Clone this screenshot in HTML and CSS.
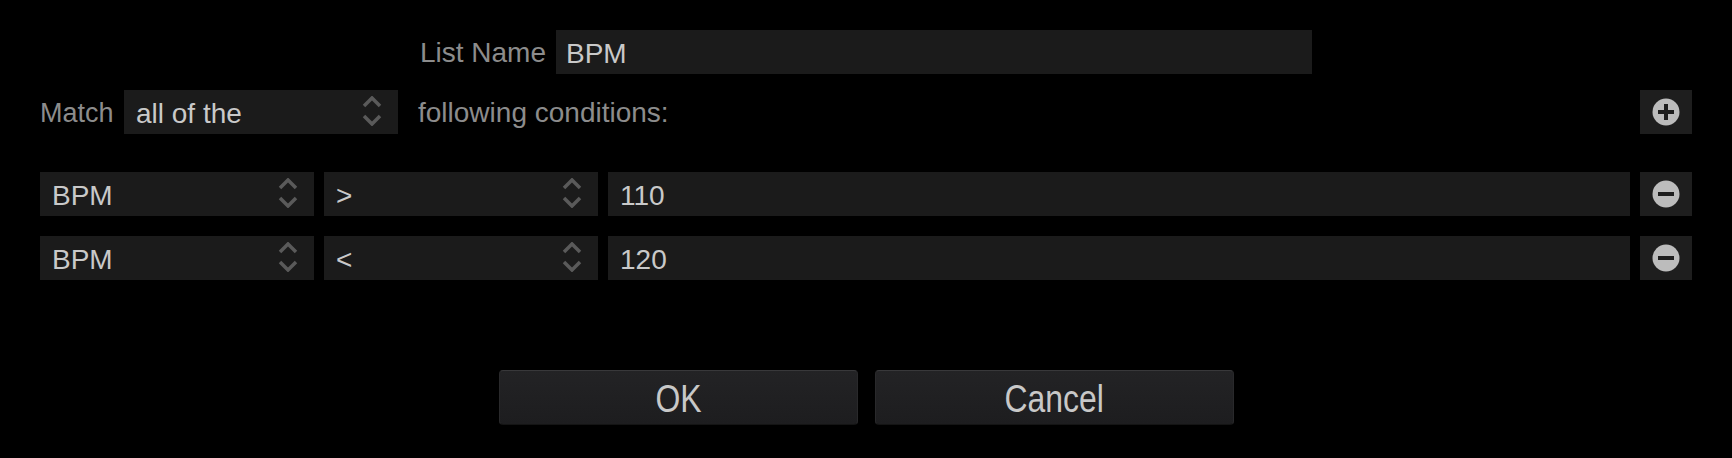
FILE: index.html
```html
<!DOCTYPE html>
<html lang="en">
<head>
    <meta charset="UTF-8">
    <meta name="viewport" content="width=device-width, initial-scale=1.0">
    <title>Smart List</title>
    <link rel="stylesheet" href="styles.css">
</head>
<body>

    <div class="dialog">
        <div class="name-row">
            <label class="label name-label" for="list-name">List Name</label>
            <div class="field name-field" id="list-name">BPM</div>
        </div>

        <div class="match-row">
            <span class="label match-label">Match</span>
            <div class="select match-select">
                <span>all of the</span>
                <svg class="chevrons" width="20" height="30" viewBox="0 0 20 30"><polyline points="2,10 10,2 18,10"/><polyline points="2,20 10,28 18,20"/></svg>
            </div>
            <span class="label following">following conditions:</span>
            <button class="icon-btn add-btn" title="Add condition">
                <svg width="28" height="28" viewBox="0 0 28 28"><circle cx="14" cy="14" r="13.5" class="disc"/><rect x="6" y="12" width="16" height="4" class="sign"/><rect x="12" y="6" width="4" height="16" class="sign"/></svg>
            </button>
        </div>

        <div class="conditions">
            <div class="cond-row">
                <div class="select">
                    <span>BPM</span>
                    <svg class="chevrons" width="20" height="30" viewBox="0 0 20 30"><polyline points="2,10 10,2 18,10"/><polyline points="2,20 10,28 18,20"/></svg>
                </div>
                <div class="select">
                    <span>&gt;</span>
                    <svg class="chevrons" width="20" height="30" viewBox="0 0 20 30"><polyline points="2,10 10,2 18,10"/><polyline points="2,20 10,28 18,20"/></svg>
                </div>
                <div class="field value-field">110</div>
                <button class="icon-btn" title="Remove condition">
                    <svg width="28" height="28" viewBox="0 0 28 28"><circle cx="14" cy="14" r="13.5" class="disc"/><rect x="6" y="12" width="16" height="4" class="sign"/></svg>
                </button>
            </div>
            <div class="cond-row">
                <div class="select">
                    <span>BPM</span>
                    <svg class="chevrons" width="20" height="30" viewBox="0 0 20 30"><polyline points="2,10 10,2 18,10"/><polyline points="2,20 10,28 18,20"/></svg>
                </div>
                <div class="select">
                    <span>&lt;</span>
                    <svg class="chevrons" width="20" height="30" viewBox="0 0 20 30"><polyline points="2,10 10,2 18,10"/><polyline points="2,20 10,28 18,20"/></svg>
                </div>
                <div class="field value-field">120</div>
                <button class="icon-btn" title="Remove condition">
                    <svg width="28" height="28" viewBox="0 0 28 28"><circle cx="14" cy="14" r="13.5" class="disc"/><rect x="6" y="12" width="16" height="4" class="sign"/></svg>
                </button>
            </div>
        </div>

        <div class="actions">
            <button class="action-btn"><span class="narrow">OK</span></button>
            <button class="action-btn"><span class="narrow">Cancel</span></button>
        </div>
    </div>

</body>
</html>
```

FILE: styles.css
```css
body {
    margin: 0;
    background-color: #000;
    font-family: 'Liberation Sans', Arial, sans-serif;
    font-size: 28px;
    color: #c9c9c9;
}

.dialog {
    padding: 30px 40px 0 40px;
}

.label {
    color: #8c8c8c;
    white-space: nowrap;
    padding-top: 2px;
}

.field,
.select {
    height: 44px;
    box-sizing: border-box;
    background-color: #1b1b1b;
    display: flex;
    align-items: center;
    padding-left: 12px;
    padding-top: 3px;
    color: #c9c9c9;
}

.select {
    width: 274px;
    justify-content: space-between;
    padding-right: 16px;
}

.chevrons {
    margin-top: -5px;
}

.chevrons polyline {
    fill: none;
    stroke: #5a5a5a;
    stroke-width: 3.5;
}

/* list name row */
.name-row {
    display: flex;
    align-items: center;
    gap: 10px;
}

.name-label {
    width: 506px;
    text-align: right;
}

.name-field {
    width: 756px;
    padding-left: 10px;
}

/* match row */
.match-row {
    display: flex;
    align-items: center;
    gap: 10px;
    margin-top: 16px;
}

.match-label {
    width: 74px;
    font-size: 27px;
}

.following {
    margin-left: 10px;
}

.icon-btn {
    width: 52px;
    height: 44px;
    border: none;
    padding: 0;
    background-color: #1e1e1e;
    display: flex;
    align-items: center;
    justify-content: center;
    cursor: pointer;
}

.add-btn {
    margin-left: auto;
}

.icon-btn .disc {
    fill: #bcbcbc;
}

.icon-btn .sign {
    fill: #1e1e1e;
}

/* conditions */
.conditions {
    margin-top: 38px;
    display: flex;
    flex-direction: column;
    gap: 20px;
}

.cond-row {
    display: flex;
    gap: 10px;
}

.value-field {
    flex: 1;
}

/* buttons */
.actions {
    display: flex;
    justify-content: center;
    gap: 17px;
    margin-top: 90px;
}

.action-btn {
    width: 359px;
    height: 55px;
    background: linear-gradient(#232325, #1d1d1f);
    border: 1px solid #29292b;
    border-top-color: #38383a;
    border-bottom-color: #141414;
    border-radius: 4px;
    color: #c8c8c8;
    font-family: 'Liberation Sans', Arial, sans-serif;
    font-size: 38px;
    padding: 3px 0 0 0;
    cursor: pointer;
}

.narrow {
    display: inline-block;
    transform: scaleX(0.84);
}
```
